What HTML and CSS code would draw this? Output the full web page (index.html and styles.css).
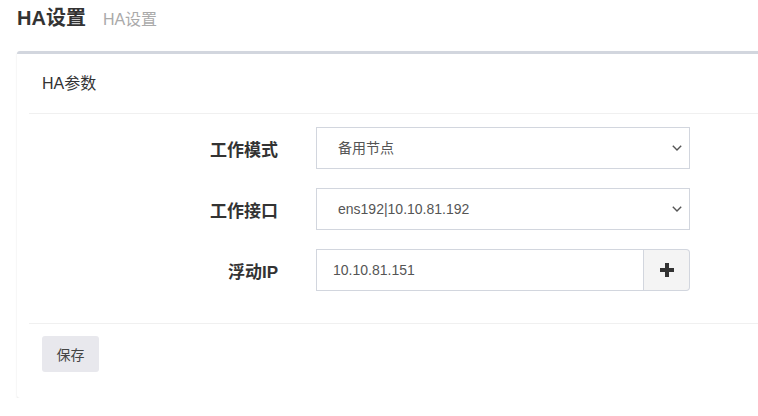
FILE: index.html
```html
<!DOCTYPE html>
<html lang="zh">
<head>
<meta charset="utf-8">
<title>HA设置</title>
<link rel="stylesheet" href="styles.css">
</head>
<body>
<div class="wrapper">
  <h1 class="page-title">HA设置<small>HA设置</small></h1>
  <div class="box">
    <div class="box-inner">
      <div class="box-header">HA参数</div>
      <form class="form">
        <div class="row">
          <label class="label">工作模式</label>
          <div class="control select-wrap">
            <select class="field select">
              <option>备用节点</option>
            </select>
            <svg class="chevron" width="10" height="6" viewBox="0 0 10 6"><path d="M0.8 0.8 L5 5 L9.2 0.8" fill="none" stroke="#555" stroke-width="1.4"/></svg>
          </div>
        </div>
        <div class="row">
          <label class="label">工作接口</label>
          <div class="control select-wrap">
            <select class="field select">
              <option>ens192|10.10.81.192</option>
            </select>
            <svg class="chevron" width="10" height="6" viewBox="0 0 10 6"><path d="M0.8 0.8 L5 5 L9.2 0.8" fill="none" stroke="#555" stroke-width="1.4"/></svg>
          </div>
        </div>
        <div class="row">
          <label class="label">浮动IP</label>
          <div class="control input-group">
            <input class="field input" type="text" value="10.10.81.151">
            <button type="button" class="addon"><svg width="14" height="14" viewBox="0 0 14 14"><path d="M5 0h4v5h5v4H9v5H5V9H0V5h5z" fill="#333"/></svg></button>
          </div>
        </div>
      </form>
      <div class="box-footer">
        <button type="button" class="btn">保存</button>
      </div>
    </div>
  </div>
</div>
</body>
</html>
```
FILE: styles.css
```css
* { box-sizing: border-box; }
html, body { margin: 0; padding: 0; background: #fff; overflow: hidden; }
body {
  font-family: "Liberation Sans", "Noto Sans CJK SC", sans-serif;
  color: #333;
  font-size: 14px;
}
.wrapper { padding-left: 17px; }
.page-title {
  margin: 0;
  height: 36px;
  line-height: 36px;
  font-size: 20px;
  font-weight: bold;
  color: #333;
}
.page-title small {
  font-size: 16px;
  font-weight: normal;
  color: #aaa;
  margin-left: 17px;
}
.box {
  margin-top: 15px;
  width: 770px;
  border-top: 3px solid #d2d6de;
  border-radius: 3px;
  background: #fff;
  box-shadow: 0 1px 2px rgba(0,0,0,0.12);
}
.box-inner { padding-left: 12px; }
.box-header {
  height: 60px;
  line-height: 60px;
  padding-left: 13px;
  font-size: 16px;
  color: #333;
  border-bottom: 1px solid #f0f0f0;
}
.form { padding: 13px 0 13px; border-bottom: 1px solid #f0f0f0; }
.row {
  display: flex;
  align-items: center;
  height: 42px;
  margin-bottom: 19px;
}
.label {
  width: 249px;
  text-align: right;
  font-size: 17px;
  font-weight: bold;
  color: #333;
  margin-right: 38px;
}
.control { width: 374px; height: 42px; }
.select-wrap { position: relative; }
.field {
  width: 100%;
  height: 42px;
  border: 1px solid #d2d6de;
  border-radius: 0;
  background: #fff;
  font-family: "Liberation Sans", "Noto Sans CJK SC", sans-serif;
  font-size: 14px;
  color: #555;
  outline: none;
  margin: 0;
}
.select {
  -webkit-appearance: none;
  appearance: none;
  padding-left: 21px;
}
.chevron {
  position: absolute;
  right: 8px;
  top: 18px;
  pointer-events: none;
}
.input-group { display: flex; }
.input { flex: 1; padding-left: 16px; }
.addon {
  width: 46px;
  height: 42px;
  margin: 0;
  padding: 0;
  border: 1px solid #d2d6de;
  border-left: none;
  border-radius: 0 4px 4px 0;
  background: #f4f4f4;
  display: flex;
  align-items: center;
  justify-content: center;
}
.box-footer { padding: 12px 0 26px 13px; }
.btn {
  width: 57px;
  height: 36px;
  border: none;
  border-radius: 3px;
  background: #e8e8ed;
  color: #444;
  font-family: "Liberation Sans", "Noto Sans CJK SC", sans-serif;
  font-size: 14px;
  padding: 0;
}
```
